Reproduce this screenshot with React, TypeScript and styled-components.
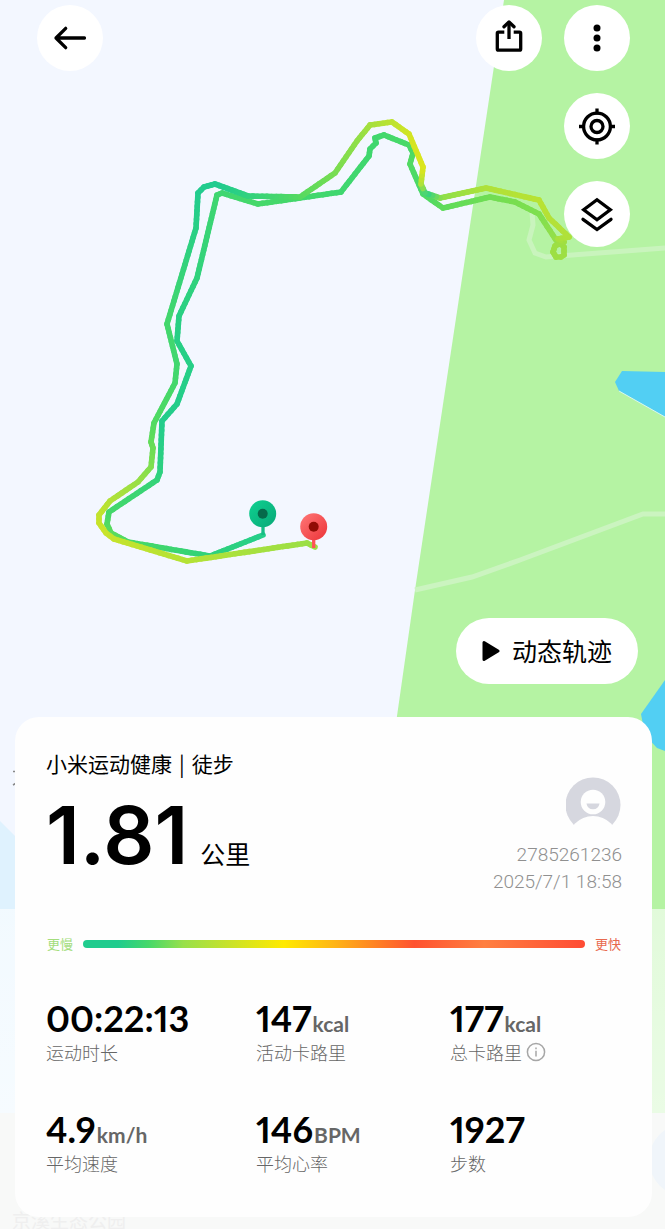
import React from 'react';
import styled, { createGlobalStyle } from 'styled-components';

const GlobalStyle = createGlobalStyle`
  * { box-sizing: border-box; }
  body {
    margin: 0;
    background: #f3f7ff;
    color: #000;
    font-family: Inter, "Noto Sans CJK SC", sans-serif;
  }
  h1, p, dl, dt, dd { margin: 0; font-weight: 400; }
`;

const Page = styled.main`
  position: relative;
  display: flex;
  flex-direction: column;
  min-height: 100vh;
  overflow: hidden;
`;

const MapCanvas = styled.svg`
  position: absolute;
  inset: 0;
  width: 100%;
  height: 100%;
`;

const Stage = styled.section`
  position: relative;
  flex: 1;
  display: flex;
  flex-direction: column;
  align-items: flex-end;
  gap: 22px;
  padding: 5px 35px 33px 37px;
`;

const Toolbar = styled.header`
  align-self: stretch;
  display: flex;
  gap: 22px;
`;

const RoundButton = styled.button<{ $pushRight?: boolean }>`
  display: grid;
  place-items: center;
  width: 66px;
  height: 66px;
  padding: 0;
  border: 0;
  border-radius: 50%;
  background: #fff;
  color: #000;
  margin-right: ${p => (p.$pushRight ? 'auto' : '0')};
`;

const Icon = styled.svg`
  width: 40px;
  height: 40px;
  fill: none;
  stroke: currentColor;
  stroke-width: 3.3;
`;

const PlayButton = styled.button`
  display: flex;
  align-items: center;
  gap: 12px;
  height: 66px;
  margin: auto -8px 0 0;
  padding: 0 26px 2px;
  border: 0;
  border-radius: 33px;
  background: #fff;
  color: #000;
  font: 400 25px/36px "Noto Sans CJK SC", sans-serif;
`;

const Card = styled.article`
  position: relative;
  margin: 0 13px 12px 15px;
  padding: 31px 30px 42px 31px;
  border-radius: 24px;
  background: #fefefe;
`;

const Summary = styled.div`
  display: flex;
  justify-content: space-between;
`;

const Title = styled.h1`
  display: flex;
  gap: 7px;
  font: 400 21px/30px "Noto Sans CJK SC", sans-serif;
`;

const Distance = styled.p`
  display: flex;
  align-items: baseline;
  gap: 12px;
  font: 600 80px/114px Inter, sans-serif;
`;

const DistanceUnit = styled.span`
  font: 400 25px/36px "Noto Sans CJK SC", sans-serif;
`;

const Owner = styled.div`
  display: flex;
  flex-direction: column;
  align-items: flex-end;
  padding-top: 29px;
  color: #909090;
  font: 300 19px/27px Roboto, sans-serif;
`;

const Avatar = styled.svg`
  width: 56px;
  height: 56px;
  margin-bottom: 8px;
`;

const Pace = styled.div`
  display: flex;
  align-items: center;
  gap: 10px;
  margin-top: 40px;
  padding: 0 1px;
`;

const PaceLabel = styled.span<{ $color: string }>`
  color: ${p => p.$color};
  font: 400 13px/18px "Noto Sans CJK SC", sans-serif;
`;

const PaceBar = styled.div`
  flex: 1;
  height: 8px;
  border-radius: 4px;
  background: linear-gradient(
    90deg,
    #20cc8e 0%, #20cc8e 7%, #45d86a 13%, #98e04a 20%, #c8e22a 29%,
    #ffea00 40%, #ffb515 50%, #ff5230 66%, #ff7f40 80%, #ff4b34 100%
  );
`;

const Stats = styled.dl`
  display: grid;
  grid-template-columns: 210fr 194fr 172fr;
  row-gap: 43px;
  margin-top: 43px;
`;

const Stat = styled.div`
  display: flex;
  flex-direction: column-reverse;
`;

const StatLabel = styled.dt`
  display: flex;
  align-items: center;
  gap: 4px;
  height: 24px;
  color: #666;
  font: 300 18px/24px "Noto Sans CJK SC", sans-serif;
`;

const StatValue = styled.dd`
  display: flex;
  align-items: baseline;
  gap: 1px;
  height: 44px;
  font: 700 36px/44px Lato, sans-serif;
  font-variant-numeric: proportional-nums;
  white-space: nowrap;
`;

const StatUnit = styled.span`
  color: #666;
  font: 700 21px/28px Lato, sans-serif;
`;

const InfoButton = styled.button`
  display: grid;
  padding: 0;
  border: 0;
  background: none;
  color: #a6a6a6;
`;

type RoutePoint = [number, number, string];

const OUTBOUND: RoutePoint[] = [
  [263, 535, '#25cf8c'], [210, 556, '#2fd17a'], [128, 542, '#48d967'],
  [111, 533, '#5bdb5c'], [107, 524, '#55da60'], [109, 512, '#45d86a'],
  [157, 480, '#35d379'], [160, 472, '#2ed17f'], [162, 421, '#24cd8c'],
  [177, 404, '#24cd8a'], [191, 366, '#26cf87'], [177, 341, '#27cf85'],
  [179, 316, '#28cf83'], [197, 278, '#30d27d'], [217, 195, '#3fd671'],
  [222, 193, '#3fd671'], [258, 204, '#46d86a'], [300, 198, '#43d76c'],
  [341, 192, '#3fd76f'], [369, 156, '#40d76e'], [370, 149, '#40d76e'],
  [376, 143, '#40d76e'], [375, 138, '#40d76e'], [384, 135, '#43d86c'],
  [409, 145, '#48d968'], [413, 153, '#4bd966'], [410, 164, '#52da61'],
  [423, 194, '#48d968'], [443, 208, '#5ddb5b'], [490, 197, '#70dd54'],
  [515, 202, '#78de50'], [539, 214, '#7ddf4f'], [558, 243, '#97df48'],
];

const RETURN: RoutePoint[] = [
  [560, 243, '#97df48'], [564, 247, '#9ddf43'], [564, 255, '#9ddf43'],
  [561, 257, '#9ddf43'], [556, 257, '#9ddf43'], [553, 252, '#9ddf43'],
  [555, 246, '#9ddf43'], [564, 242, '#9ddf43'], [558, 239, '#a7e03d'],
  [569, 237, '#aee13a'],
  [549, 218, '#b4e137'], [539, 200, '#b8e233'], [486, 188, '#b0e139'],
  [440, 198, '#8fdf49'], [425, 193, '#2ed184'], [421, 184, '#a7e13f'],
  [423, 167, '#dce51d'], [409, 134, '#d3e423'], [392, 122, '#bfe32f'],
  [370, 125, '#a8e03d'], [357, 141, '#91df47'], [335, 173, '#7add51'],
  [300, 197, '#58da5f'], [248, 196, '#32d27c'], [215, 184, '#20cb90'],
  [204, 187, '#22cc8e'], [198, 193, '#22cc8e'], [196, 228, '#28cf86'],
  [167, 324, '#43d76c'], [177, 364, '#40d76f'], [175, 383, '#43d76b'],
  [154, 423, '#4fda63'], [151, 442, '#60dc5b'], [153, 448, '#68dc57'],
  [151, 467, '#7ddf50'], [138, 482, '#96df47'], [110, 501, '#b0e139'],
  [99, 515, '#c0e32f'], [99, 523, '#c7e32a'], [106, 533, '#c9e42a'],
  [114, 539, '#c5e32c'], [187, 561, '#b4e236'], [307, 543, '#9bdf46'],
  [315, 547, '#9bdf46'],
];

const channels = (hex: string) =>
  [1, 3, 5].map(i => parseInt(hex.slice(i, i + 2), 16));

const mixColor = (a: string, b: string, t: number) => {
  const from = channels(a);
  const to = channels(b);
  return `rgb(${from.map((v, i) => Math.round(v + (to[i] - v) * t)).join(',')})`;
};

// Splits each leg into short strokes so that the pace colour fades along it.
function Route({ points }: { points: RoutePoint[] }) {
  const strokes: React.ReactNode[] = [];
  points.slice(1).forEach(([x2, y2, c2], i) => {
    const [x1, y1, c1] = points[i];
    const steps = Math.max(1, Math.ceil(Math.hypot(x2 - x1, y2 - y1) / 5));
    for (let s = 0; s < steps; s += 1) {
      const a = s / steps;
      const b = (s + 1) / steps;
      strokes.push(
        <line
          key={`${i}-${s}`}
          x1={x1 + (x2 - x1) * a}
          y1={y1 + (y2 - y1) * a}
          x2={x1 + (x2 - x1) * b}
          y2={y1 + (y2 - y1) * b}
          stroke={mixColor(c1, c2, (a + b) / 2)}
        />,
      );
    }
  });
  return <g strokeWidth="5.6" strokeLinecap="round">{strokes}</g>;
}

function TrackMap() {
  return (
    <MapCanvas viewBox="0 0 665 1229" preserveAspectRatio="xMidYMin slice" role="img" aria-label="徒步轨迹地图">
      <defs>
        <linearGradient id="startPin" x1="0" y1="0" x2="1" y2="1">
          <stop offset="0" stopColor="#0fd191" />
          <stop offset="1" stopColor="#08a877" />
        </linearGradient>
        <linearGradient id="endPin" x1="0" y1="0" x2="1" y2="1">
          <stop offset="0" stopColor="#ff7878" />
          <stop offset="1" stopColor="#ec3337" />
        </linearGradient>
        <linearGradient id="fade" x1="0" y1="909" x2="0" y2="1113" gradientUnits="userSpaceOnUse">
          <stop offset="0" stopColor="#fff" stopOpacity="0.6" />
          <stop offset="1" stopColor="#fff" stopOpacity="0.72" />
        </linearGradient>
      </defs>
      <rect width="665" height="1229" fill="#f3f7ff" />
      <path d="M0 821L20 841V1229H0Z" fill="#dff2fe" />
      <path d="M504 0H665V1229H326L397 716L415 590Z" fill="#b5f3a3" />
      <path d="M622 371L665 372V417L619 391L615 382Z" fill="#52cff3" />
      <path d="M619 391L665 417" stroke="#d9f7ee" strokeWidth="1" />
      <path d="M665 680L641 714L645 735L657 748L665 751Z" fill="#52cff3" />
      <path d="M532 212L533 225L529 240L535 253L546 257L665 248" fill="none" stroke="#c9f4bd" strokeWidth="5" />
      <path d="M415 590L472 577L520 560L643 514H665" fill="none" stroke="#cbf4c0" strokeWidth="5" />
      <path d="M13 771.500H18M13 785L18 782" stroke="#888" strokeWidth="1.500" />
      <Route points={OUTBOUND} />
      <Route points={RETURN} />
      <path d="M263 520V535" stroke="#16bd86" strokeWidth="3.300" />
      <circle cx="262.700" cy="513.700" r="13.500" fill="url(#startPin)" />
      <circle cx="262.700" cy="513.700" r="5" fill="#06694a" />
      <path d="M313.700 533V548" stroke="#ff5357" strokeWidth="3.300" />
      <circle cx="313.700" cy="526.700" r="13.500" fill="url(#endPin)" />
      <circle cx="313.700" cy="526.700" r="5" fill="#910c05" />
      <rect y="909" width="665" height="204" fill="url(#fade)" />
      <rect y="1113" width="665" height="116" fill="#f8f9f8" />
      <circle cx="685" cy="1160" r="36" fill="#f0f5fa" />
      <text x="12" y="1228" fontSize="19" fill="#efefef" fontFamily="Noto Sans CJK SC, sans-serif">京溪生态公园</text>
    </MapCanvas>
  );
}

interface StatItem { value: string; unit?: string; label: string; info?: boolean }

const STATS: StatItem[] = [
  { value: '00:22:13', label: '运动时长' },
  { value: '147', unit: 'kcal', label: '活动卡路里' },
  { value: '177', unit: 'kcal', label: '总卡路里', info: true },
  { value: '4.9', unit: 'km/h', label: '平均速度' },
  { value: '146', unit: 'BPM', label: '平均心率' },
  { value: '1927', label: '步数' },
];

export default function App() {
  return (
    <>
      <GlobalStyle />
      <Page>
        <TrackMap />
        <Stage>
          <Toolbar>
            <RoundButton type="button" aria-label="返回" $pushRight>
              <Icon viewBox="0 0 40 40" strokeLinecap="round" strokeLinejoin="round">
                <path d="M34.500 20H6M15.700 10.300L6 20L15.700 29.700" />
              </Icon>
            </RoundButton>
            <RoundButton type="button" aria-label="分享">
              <Icon viewBox="0 0 40 40">
                <path d="M15.300 14.200H9.500Q8.300 14.200 8.300 15.400V31Q8.300 32.200 9.500 32.200H30.500Q31.700 32.200 31.700 31V15.400Q31.700 14.200 30.500 14.200H24.700" />
                <path d="M20 21V5" />
                <path d="M15 8.800L20 4L25 8.800" strokeLinecap="round" strokeLinejoin="round" />
              </Icon>
            </RoundButton>
            <RoundButton type="button" aria-label="更多">
              <Icon viewBox="0 0 40 40">
                <g fill="currentColor" stroke="none">
                  <circle cx="20" cy="10" r="3.500" />
                  <circle cx="20" cy="20" r="3.500" />
                  <circle cx="20" cy="30" r="3.500" />
                </g>
              </Icon>
            </RoundButton>
          </Toolbar>
          <RoundButton type="button" aria-label="定位">
            <Icon viewBox="0 0 40 40">
              <circle cx="20" cy="20.500" r="13.400" />
              <circle cx="20" cy="20.500" r="6" />
              <path d="M20 2.500V8.500M20 32.500V38.500M2 20.500H8M32 20.500H38" />
            </Icon>
          </RoundButton>
          <RoundButton type="button" aria-label="图层">
            <Icon viewBox="0 0 40 40" strokeLinecap="round" strokeLinejoin="miter">
              <path d="M20 5.700L33.300 15.700L20 25.700L6.700 15.700Z" />
              <path d="M6 25.300L20 35.500L34 25.300" />
            </Icon>
          </RoundButton>
          <PlayButton type="button">
            <svg width="18" height="22" viewBox="0 0 18 22" aria-hidden="true">
              <path d="M2 3.500V20.500L16 12Z" fill="#000" stroke="#000" strokeWidth="3" strokeLinejoin="round" />
            </svg>
            动态轨迹
          </PlayButton>
        </Stage>

        <Card>
          <Summary>
            <div>
              <Title><span>小米运动健康</span><span>|</span><span>徒步</span></Title>
              <Distance>1.81<DistanceUnit>公里</DistanceUnit></Distance>
            </div>
            <Owner>
              <Avatar viewBox="0 0 56 56" role="img" aria-label="头像">
                <clipPath id="avatarClip"><circle cx="27" cy="28" r="27.500" /></clipPath>
                <g clipPath="url(#avatarClip)">
                  <rect width="56" height="56" fill="#d6d7df" />
                  <circle cx="27" cy="25" r="12.300" fill="#fefefe" />
                  <path d="M20.500 26.500H33.500Q32.500 32.300 27 32.300T20.500 26.500Z" fill="#d6d7df" />
                </g>
                <circle cx="27" cy="64.500" r="25.500" fill="#fefefe" />
              </Avatar>
              <span>2785261236</span>
              <time dateTime="2025-07-01T18:58">2025/7/1 18:58</time>
            </Owner>
          </Summary>
          <Pace>
            <PaceLabel $color="#a3dd7c">更慢</PaceLabel>
            <PaceBar />
            <PaceLabel $color="#e8694f">更快</PaceLabel>
          </Pace>
          <Stats>
            {STATS.map(({ value, unit, label, info }) => (
              <Stat key={label}>
                <StatLabel>
                  {label}
                  {info && (
                    <InfoButton type="button" aria-label="说明">
                      <svg width="20" height="20" viewBox="0 0 20 20" fill="none" stroke="currentColor" strokeWidth="1.500">
                        <circle cx="10" cy="10" r="8.600" />
                        <path d="M10 8.700V14.500M10 5.500V7.200" />
                      </svg>
                    </InfoButton>
                  )}
                </StatLabel>
                <StatValue>{value}{unit && <StatUnit>{unit}</StatUnit>}</StatValue>
              </Stat>
            ))}
          </Stats>
        </Card>
      </Page>
    </>
  );
}
